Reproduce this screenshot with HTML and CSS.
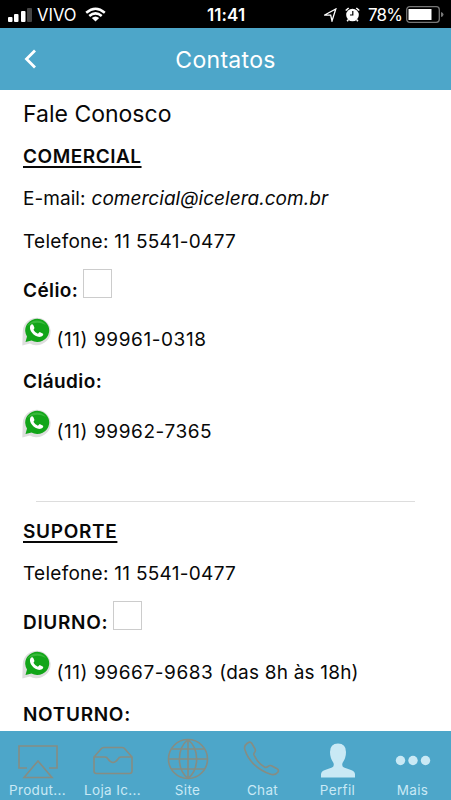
FILE: index.html
```html
<!DOCTYPE html>
<html lang="pt-BR">
<head>
<meta charset="utf-8">
<title>Contatos</title>
<link rel="stylesheet" href="styles.css">
</head>
<body>
<svg class="defs" width="0" height="0">
  <symbol id="whatsapp" viewBox="0 0 29 29">
    <path d="M.3 28.500L.8 14A13.900 13.700 0 1 1 8 26.500Z" fill="#dedede"/>
    <path d="M3.500 25L5 19.500A12 11.600 0 1 1 9.500 23.600Z" fill="#12a519"/>
    <path d="M5 9A11 10 0 0 1 24 8Q14 3 5 9Z" fill="#37b83a"/>
    <path d="M8.500 8.300Q10.200 6.200 11.400 8.300L12.400 10.700Q12.300 12 11.400 12.700Q12.700 15.300 15.900 16.700L17.700 15L21.100 16.700Q21.800 18.700 18.500 19.800C13 20.800 5.800 13.300 8.500 8.300Z" fill="#fff"/>
  </symbol>
</svg>
<div class="status">
  <svg class="signal" width="24" height="14"><rect y="9" width="4.500" height="5" rx="1"/><rect x="6" y="6" width="4.500" height="8" rx="1"/><rect x="13" y="3" width="4.500" height="11" rx="1"/><rect class="dim" x="19" y="0" width="5" height="14" rx="1"/></svg>
  <span class="carrier">VIVO</span>
  <svg class="wifi" width="21" height="15" viewBox="0 0 21 15"><path d="M1.200 5.700Q10.500-2.200 19.800 5.700M4.300 9Q10.500 3.700 16.700 9" fill="none" stroke="#fff" stroke-width="2.500"/><path d="M6.800 11Q10.500 8 14.200 11L10.500 14.500Z"/></svg>
  <time>11:41</time>
  <svg class="arrow" width="14" height="14"><path d="M1.200 7.200L12.800 1L9 13L7.700 7.200Z" fill="none" stroke="#fff" stroke-width="1.300"/></svg>
  <svg class="alarm" width="15" height="15"><circle cx="7.500" cy="8" r="6.300"/><path d="M.7 3.500L3.700 1M11.300 1l3 2.500M3.200 12.700l-1 1.500M11.800 12.700l1 1.500" stroke="#fff" stroke-width="1.600"/><path d="M7.800 4v4H5" fill="none" stroke="#000" stroke-width="1.200"/></svg>
  <span class="percent">78%</span>
  <svg class="battery" width="38" height="17"><rect x=".7" y=".7" width="32.600" height="15.600" rx="3" fill="none" stroke="#777" stroke-width="1.300"/><rect x="2.500" y="3" width="23" height="11"/><path d="M35 6Q37.500 6.500 37.500 8.500T35 11Z" fill="#777"/></svg>
</div>
<header>
  <svg class="back" width="13" height="20"><path d="M11 1.500L2.500 10L11 18.500" fill="none" stroke="#fff" stroke-width="2.800"/></svg>
  <h1>Contatos</h1>
</header>
<main>
  <h2>Fale Conosco</h2>
  <p><b class="section">COMERCIAL</b></p>
  <p><span class="mail-label">E-mail:</span><i>comercial@icelera.com.br</i></p>
  <p class="r43"><span class="phone">Telefone: 11 5541-0477</span></p>
  <p class="r49"><b class="name">Célio:</b><span class="blank"></span></p>
  <p class="r49"><svg class="wa"><use href="#whatsapp"/></svg><span class="mobile">(11) 99961-0318</span></p>
  <p><b class="name">Cláudio:</b></p>
  <p class="r50"><svg class="wa"><use href="#whatsapp"/></svg><span class="mobile">(11) 99962-7365</span></p>
  <hr>
  <p><b class="section support">SUPORTE</b></p>
  <p><span class="phone">Telefone: 11 5541-0477</span></p>
  <p class="r49"><b class="support">DIURNO:</b><span class="blank"></span></p>
  <p class="r50"><svg class="wa"><use href="#whatsapp"/></svg><span class="mobile">(11) 99667-9683 <span class="hours">(das 8h às 18h)</span></span></p>
  <p><b class="support">NOTURNO:</b></p>
</main>
<nav>
  <a><svg viewBox="0 0 44 44"><path d="M11 32H3V10H41V32H33M22 25L36 41.500H8Z"/></svg><span>Produt...</span></a>
  <a><svg viewBox="0 0 44 44"><path d="M3 21V35Q3 37.500 5.500 37.500H38.500Q41 37.500 41 35V21L34 13Q33 11.500 31 11.500H13Q11 11.500 10 13ZM3 21H14Q16 21 17 23Q22 30 27 23Q28 21 30 21H41"/></svg><span>Loja Ic...</span></a>
  <a><svg viewBox="0 0 44 44"><circle cx="22" cy="23" r="19.500"/><path d="M2.500 23H41.500M22 3.500V42.500M6 13H38M6 33H38M22 3.500C10.500 13 10.500 33 22 42.500M22 3.500C33.500 13 33.500 33 22 42.500"/></svg><span>Site</span></a>
  <a><svg viewBox="0 0 44 44"><path d="M4 14Q2.500 10 6 7.500L8 6.300Q9.500 5.500 10.700 7.300L14 12.800Q15 15 13.500 16.500Q12.500 17.500 13 19C15.500 24.500 19 28.500 23.500 31Q25 32 27 30.500Q28.500 29 30.500 29.800L36.500 33Q38 34 37 36Q34 40 29 38C17 34 7.500 25 4 14Z"/></svg><span>Chat</span></a>
  <a><svg class="solid" viewBox="0 0 44 44"><path d="M5 41.500V38.500Q5 35 9 34L16 31.500Q18.500 30.500 17.500 27Q14 22 14 16Q14 7.500 22 7.500T30 16Q30 22 26.500 27Q25.500 30.500 28 31.500L35 34Q39 35 39 38.500V41.500Z"/></svg><span>Perfil</span></a>
  <a><svg class="solid" viewBox="0 0 44 44"><circle cx="9.500" cy="24.500" r="4.700"/><circle cx="22" cy="24.500" r="4.700"/><circle cx="34.500" cy="24.500" r="4.700"/></svg><span>Mais</span></a>
</nav>
</body>
</html>
```
FILE: styles.css
```css
* { box-sizing: border-box; }
body {
  margin: 0;
  width: 451px;
  height: 800px;
  display: flex;
  flex-direction: column;
  overflow: hidden;
  background: #fff;
  color: #080808;
  font-family: Inter, "Liberation Sans", sans-serif;
  font-size: 19px;
}
.defs { position: absolute; }
svg { flex: none; }
.status {
  height: 28px;
  flex: none;
  display: flex;
  align-items: center;
  padding: 1px 4px 0 8px;
  background: #000;
  color: #fff;
  fill: #fff;
  font-size: 17px;
  white-space: nowrap;
}
.dim { fill: #444; }
.carrier { width: 43px; margin-left: 5px; font-size: 16.6px; }
.wifi { margin-left: 5px; }
.status time { width: 44px; margin-left: 101px; font-weight: 600; letter-spacing: .1px; }
.arrow { margin-left: 72px; }
.alarm { margin-left: 8px; }
.percent { width: 36px; margin-left: 8px; letter-spacing: -.8px; }
.battery { margin-left: 2px; }
header {
  height: 62px;
  flex: none;
  display: grid;
  grid-template-columns: 60px 1fr 60px;
  align-items: center;
  background: #4da6c9;
  color: #fff;
}
.back { margin-left: 24px; }
h1 { margin: 0; padding-top: 1px; text-align: center; font-size: 23px; font-weight: 400; letter-spacing: .3px; }
main {
  flex: 1;
  min-height: 0;
  overflow: hidden;
  padding: 0 23px;
}
h2 { height: 37px; margin: 0; padding-top: 9px; font-size: 23px; line-height: 30px; font-weight: 400; white-space: nowrap; }
p {
  height: 42px;
  margin: 0;
  display: flex;
  align-items: flex-end;
  line-height: 24px;
  white-space: nowrap;
}
.r43 { height: 43px; }
.r49 { height: 49px; }
.r50 { height: 50px; }
b { font-weight: 600; letter-spacing: .52px; }
.name { letter-spacing: .4px; }
.support { letter-spacing: .68px; }
.section { text-decoration: underline; text-decoration-thickness: 1.5px; text-underline-offset: 3px; }
.mail-label { margin-right: 6px; letter-spacing: .05px; }
i { letter-spacing: .03px; }
.phone { letter-spacing: .28px; }
.mobile { letter-spacing: .57px; }
.hours { letter-spacing: .2px; }
.blank { width: 29px; height: 29px; margin: 0 0 5px 5px; border: 1px solid #ccc; }
.wa { width: 29px; height: 29px; margin: 0 5.5px 6px -1px; }
hr { height: 1px; margin: 57px 13px 0; border: 0; background: #ddd; }
nav {
  height: 69px;
  flex: none;
  display: grid;
  grid-template-columns: repeat(6, 75px);
  background: #4da6c9;
  color: #c9e9f5;
}
nav a { display: flex; flex-direction: column; align-items: center; padding-top: 5px; }
nav svg { width: 44px; height: 44px; fill: none; stroke: #868d83; stroke-width: 1.6; }
nav .solid { fill: #c9e9f5; stroke: none; }
nav span { font-size: 13.5px; line-height: 20px; letter-spacing: .35px; white-space: nowrap; }
```
